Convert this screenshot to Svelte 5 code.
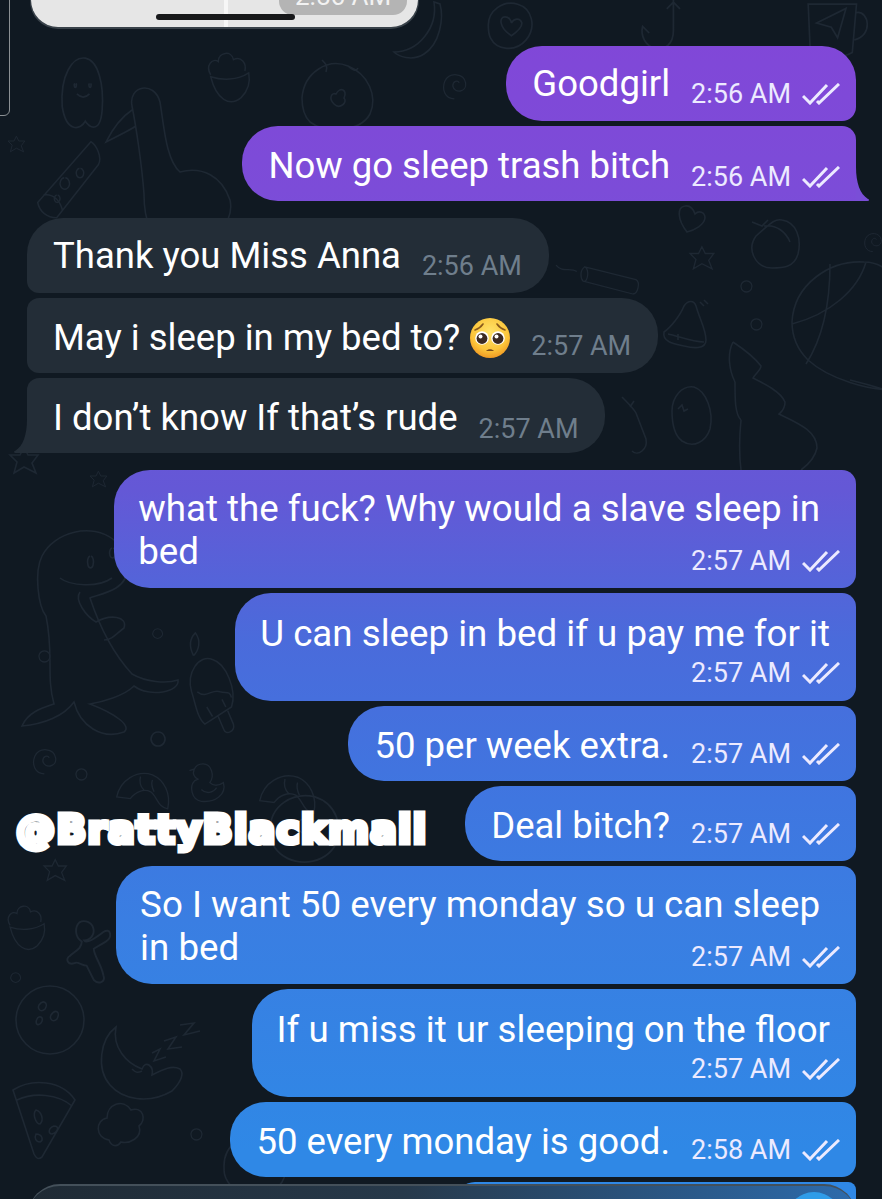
<script>
  // doodle wallpaper: [x, y, scale, path]
  const goose = "M40 118C38 90 32 50 28 30C24 10 50 4 56 26C60 50 62 84 76 96C98 90 118 100 126 124C132 150 100 176 74 172C44 166 40 140 40 118ZM28 34C16 42 8 54 2 66C14 60 26 54 32 50M60 172L52 200M80 172L84 196";
  const pizza = "M6 70L62 6C68 10 74 22 70 30L26 86C16 86 8 80 6 70ZM12 62C24 60 30 70 32 78M34 44a5 6 0 1 0 1 0M26 62a3 4 0 1 0 1 0M50 34a4 5 0 1 0 1 0";
  const pizza2 = "M1 10C20 -2 50 0 63 20L30 77C26 80 24 78 22 74ZM5 20C22 12 46 14 60 26M24 30C20 34 24 44 28 44C32 40 30 32 24 30ZM42 46C36 48 36 54 40 54C46 52 48 46 42 46ZM24 54C22 58 24 62 28 62C32 60 30 54 24 54Z";
  const ghost = "M4 50C2 20 14 2 26 4C38 6 44 28 42 54C40 76 30 70 26 64C22 72 8 76 4 50ZM16 28a1 2 0 1 0 1 0M30 28a1 2 0 1 0 1 0M18 38C22 42 26 42 30 38";
  const bowl = "M6 26C12 50 26 58 38 48C46 40 48 32 46 22C34 30 18 30 6 26ZM6 24C0 14 8 6 14 10C14 0 28 -2 30 8C38 4 44 12 42 20";
  const bird = "M6 40C8 14 32 0 52 8C72 16 82 38 74 56C64 74 30 76 14 64C8 58 6 48 6 40ZM40 36C44 28 52 32 48 40C52 44 44 52 38 46C32 40 36 34 40 36ZM26 2C30 6 32 8 30 14M52 8C56 12 60 14 62 10";
  const spiral = "M18 36C6 36 2 24 6 14C12 2 30 4 32 16C34 28 18 30 16 20C16 14 22 12 24 16";
  const banana = "M46 2C50 28 30 52 6 52C10 56 24 62 36 54C52 44 56 18 52 4Z";
  const heartc = "M6 24C6 10 20 0 34 4C48 8 52 26 42 38C32 50 14 48 8 36C6 32 6 28 6 24ZM28 34C16 26 16 16 22 16C26 16 28 20 28 22C30 18 36 16 38 22C38 26 34 30 28 34Z";
  const heart = "M12 27C2 14 2 2 10 1C16 0 19 6 20 9C24 5 30 7 30 13C29 20 20 25 12 27Z";
  const hook = "M34 0L34 28C34 40 26 46 18 44C8 42 4 32 6 24L12 30M34 2L40 8M34 2L28 8";
  const mug = "M4 4L6 50C16 56 36 56 46 50L50 4ZM50 12C62 10 66 34 48 38M12 22L40 8L32 36L26 26Z";
  const dino = "M26 90C18 80 14 46 22 30C34 6 72 -4 94 14C112 30 112 52 96 62C86 68 74 70 70 72C78 96 90 124 112 148C126 156 146 158 158 154C160 166 130 172 114 160C104 170 82 176 70 178C96 188 112 200 104 206C82 214 60 200 54 176C44 190 24 198 2 200C8 186 22 182 34 178C26 150 34 128 26 90ZM60 66C54 74 66 90 76 96C90 88 108 90 104 102C96 108 92 114 84 114M40 52C50 60 78 62 92 52M70 30a3 6 0 1 0 1 0M92 22a3 5 0 1 0 1 0";
  const pop = "M8 44C2 24 16 4 30 10C44 14 56 42 50 60L22 78C14 72 12 56 8 44ZM14 44C24 52 30 40 38 44C44 46 48 42 50 50M36 70L42 84C44 90 54 86 52 78L46 64M24 60L30 70M40 52L44 60M10 6C4 -6 8 -14 12 -18C18 -10 16 0 10 6";
  const duck = "M10 34C4 40 6 56 18 58C34 60 48 50 44 36C38 40 32 40 28 36C34 28 30 14 20 14C10 14 4 26 14 32ZM4 22L10 20M18 44C24 50 32 48 36 42";
  const shrimp = "M2 34C6 14 26 2 44 8C58 14 66 30 62 48C50 46 50 34 42 28C34 24 24 28 18 36ZM30 10C28 18 30 22 34 26M44 14C42 20 44 24 46 28";
  const apple = "M6 18C-4 32 6 50 22 50C32 50 44 50 48 36C52 20 46 4 32 2C24 0 18 8 6 18ZM2 4L12 8L18 2M14 8C26 6 36 14 40 24";
  const ball = "M2 62C4 24 40 0 74 2C86 2 96 8 102 16L102 130C80 130 40 120 18 100C8 90 2 76 2 62ZM40 4C40 40 34 76 16 104M2 64C40 54 68 30 76 2M60 120C76 124 90 128 102 132";
  const tree = "M8 2C20 10 30 18 36 26C36 30 30 34 28 38C40 44 56 52 60 62C60 70 56 72 54 74C70 82 92 90 92 108C90 118 84 124 76 130M10 42C4 30 2 14 8 2M10 42C10 60 10 74 16 80M16 80C14 100 14 114 16 130";
  const egg = "M2 26C2 12 12 0 24 2C36 6 44 26 40 44C36 56 24 64 12 56C4 50 2 38 2 26ZM8 24L12 20L14 26L18 24";
  const bell = "M2 34C8 30 18 18 22 8C26 2 32 2 34 8C38 22 44 32 44 42C44 52 30 50 22 48C12 46 0 44 2 34ZM6 36C16 38 30 44 42 44M16 42L16 36M38 4L42 8M42 2L46 6";
  const cane = "M2 2C2 2 14 14 16 18L26 44C28 54 18 62 12 56M14 6L10 12";
  const cloud = "M14 40C0 38 0 20 12 18C12 4 28 -2 36 10C48 6 52 20 44 26C48 38 34 44 26 42C22 48 16 46 14 40Z";
  const moon = "M18 2C2 14 -2 44 12 60C24 74 50 80 74 66C84 56 86 48 82 44C74 40 66 44 54 50C56 42 48 34 44 44C28 38 14 22 18 2ZM34 44C38 48 40 48 44 46";
  const zz = "M30 22L44 20L34 32L50 28M14 38L26 34L18 46L32 44M2 50L10 46L4 58L16 54";
  const star = "M14 2L18 10L28 10L22 18L26 28L14 22L4 28L7 17L0 10L10 10Z";
  const roll = "M6 6L70 22M4 24L66 40M6 6C0 10 0 20 4 24C10 26 12 10 6 6ZM70 22C76 26 72 40 66 40M-4 12C-12 6 -22 14 -30 4";
  const donut = "M2 36C2 14 22 2 42 6C62 12 70 34 60 52C48 70 18 70 6 52C2 46 2 42 2 36ZM26 32C28 24 42 24 46 34C46 44 30 44 26 32Z";
  const gingerb = "M12 2a8 8 0 1 1 4 15C18 20 24 16 32 10C38 6 40 14 34 18L24 24C24 30 30 36 32 46C34 52 28 54 24 50L18 38C14 38 10 34 8 36C2 38 0 32 4 30C8 26 14 24 14 18C8 14 8 6 12 2Z";
  const bowling = "M1 35a34 34 0 1 0 68 0a34 34 0 1 0 -68 0ZM24 20C28 14 34 18 30 24C26 28 22 24 24 20ZM36 30C40 24 46 26 42 34C38 38 34 34 36 30ZM22 34C24 30 30 32 26 38C22 42 20 38 22 34Z";
  const ring = "M8 1a7 7 0 1 0 .1 0Z";

  const doodles = [
    [104, 76, 1, goose], [32, 136, 0.95, pizza], [58, 54, 1.05, ghost], [205, 52, 0.95, bowl],
    [296, 58, 1, bird], [440, 70, 0.8, spiral], [388, 0, 1, banana], [482, 0, 1.05, heartc],
    [636, 0, 1.1, hook], [804, 0, 1.05, mug], [20, 526, 1, dino], [184, 650, 0.95, pop],
    [30, 745, 0.8, spiral], [186, 752, 0.85, duck], [115, 768, 0.85, shrimp], [258, 770, 0.9, shrimp],
    [750, 218, 1, apple], [790, 260, 1, ball], [725, 340, 1, tree], [670, 385, 1, egg],
    [662, 298, 1, bell], [620, 395, 1, cane], [580, 262, 0.8, roll], [675, 205, 1, heart],
    [690, 245, 0.85, star], [862, 230, 0.6, spiral], [90, 470, 0.6, star], [8, 135, 0.6, star],
    [10, 445, 1, star], [44, 858, 0.8, star], [12, 1080, 1, pizza2], [95, 1100, 1, cloud],
    [98, 1025, 1, moon], [150, 1003, 1, zz], [5, 905, 0.85, bowl], [65, 920, 1.2, gingerb],
    [15, 985, 1, bowling], [268, 790, 1.1, donut], [190, 1128, 0.8, ring], [10, 972, 0.7, ring],
    [222, 1130, 1, donut], [38, 650, 0.8, ring], [150, 731, 1, ring], [75, 768, 0.8, ring],
    [152, 628, 0.7, ring], [740, 280, 0.8, ring], [750, 318, 0.8, ring]
  ];

  // each row: who, text lines, time, layout
  const messages = [
    { out: true, text: ["Goodgirl"], time: "2:56 AM", shape: "first" },
    { out: true, text: ["Now go sleep trash bitch"], time: "2:56 AM", shape: "last" },
    { out: false, text: ["Thank you Miss Anna"], time: "2:56 AM", shape: "first" },
    { out: false, text: ["May i sleep in my bed to?"], emoji: true, time: "2:57 AM", shape: "mid" },
    { out: false, text: ["I don’t know If that’s rude"], time: "2:57 AM", shape: "last" },
    { out: true, text: ["what the fuck? Why would a slave sleep in", "bed"], time: "2:57 AM", shape: "first", layout: "wrap" },
    { out: true, text: ["U can sleep in bed if u pay me for it"], time: "2:57 AM", shape: "mid", layout: "stack" },
    { out: true, text: ["50 per week extra."], time: "2:57 AM", shape: "mid" },
    { out: true, text: ["Deal bitch?"], time: "2:57 AM", shape: "mid", mark: true },
    { out: true, text: ["So I want 50 every monday so u can sleep", "in bed"], time: "2:57 AM", shape: "mid", layout: "wrap" },
    { out: true, text: ["If u miss it ur sleeping on the floor"], time: "2:57 AM", shape: "mid", layout: "stack" },
    { out: true, text: ["50 every monday is good."], time: "2:58 AM", shape: "mid" }
  ];
</script>

{#snippet meta(m)}
  <div class="meta">
    <span class="time">{m.time}</span>
    {#if m.out}
      <svg class="ticks" viewBox="0 0 38 22" width="38" height="22" fill="none" stroke="currentColor" stroke-width="3">
        <path d="M1 13L8 20L25 2" />
        <path d="M15 18L17 20L37 1" />
      </svg>
    {/if}
  </div>
{/snippet}

<div class="screen">
  <svg class="wallpaper" width="882" height="1199" fill="none" stroke="#1e2833" stroke-width="1.6">
    {#each doodles as [x, y, s, d]}
      <path transform="translate({x} {y}) scale({s})" {d} />
    {/each}
  </svg>

  <div class="frame"></div>

  <div class="chat">
    <div class="photo">
      <span class="photo-time">2:56 AM</span>
      <span class="home-bar"></span>
    </div>

    {#each messages as m}
      <div class="line" class:out={m.out} class:after-switch={m.shape === "first"}>
        {#if m.mark}<span class="watermark">@BrattyBlackmail</span>{/if}
        <div class="bubble {m.shape} {m.layout ?? 'row'}" class:out={m.out}>
          <div class="text">
            {#each m.text as t, i}
              {#if i > 0}<br />{/if}{t}
            {/each}
            {#if m.emoji}
              <svg class="emoji" viewBox="0 0 40 40" width="40" height="40">
                <defs>
                  <radialGradient id="face" cx="50%" cy="35%" r="70%">
                    <stop offset="0" stop-color="#ffe36a" />
                    <stop offset="0.65" stop-color="#fcc53a" />
                    <stop offset="1" stop-color="#ee8f1e" />
                  </radialGradient>
                </defs>
                <circle cx="20" cy="20" r="20" fill="url(#face)" />
                <path d="M5 12C8 11 11 9 13 6M35 12C32 11 29 9 27 6" fill="none" stroke="#8a5a1c" stroke-width="1.6" stroke-linecap="round" />
                <circle cx="12" cy="20" r="6.8" fill="#fff" />
                <circle cx="28" cy="20" r="6.8" fill="#fff" />
                <circle cx="12" cy="20.5" r="5.4" fill="#3b2a22" />
                <circle cx="28" cy="20.5" r="5.4" fill="#3b2a22" />
                <circle cx="10.5" cy="18.5" r="2" fill="#fff" />
                <circle cx="26.5" cy="18.5" r="2" fill="#fff" />
                <path d="M16 33C18 30.5 22 30.5 24 33Z" fill="#7a4a1a" />
              </svg>
            {/if}
          </div>
          {@render meta(m)}
          {#if m.shape === "last"}
            <svg class="tail" class:out={m.out} viewBox="0 0 18 34" width="18" height="34">
              {#if m.out}
                <path d="M0 0C0 16 4 27 12 32C14 33 13 34 11 34L0 34Z" fill="#7a4ed7" />
              {:else}
                <path d="M18 0C18 16 14 27 6 32C4 33 5 34 7 34L18 34Z" fill="#232d37" />
              {/if}
            </svg>
          {/if}
        </div>
      </div>
    {/each}

    <div class="line out"><div class="bubble out mid partial"></div></div>
  </div>

  <div class="composer"><span class="send"></span></div>
</div>

<style>
  :global(body) {
    background: #101922;
  }

  .screen {
    position: relative;
    width: 882px;
    height: 1199px;
    overflow: hidden;
    background: #101922;
    font-family: Roboto, "Liberation Sans", sans-serif;
  }

  .wallpaper {
    position: absolute;
    inset: 0;
  }

  .frame {
    position: absolute;
    left: -20px;
    top: -20px;
    width: 28px;
    height: 134px;
    border: 1.5px solid #8b9094;
    border-radius: 0 0 6px 0;
  }

  .chat {
    position: relative;
    display: flex;
    flex-direction: column;
    gap: 5px;
    padding-right: 26px;
  }

  .photo {
    position: relative;
    width: 387px;
    height: 27px;
    margin: 0 0 14px 31px;
    background: linear-gradient(90deg, #e6e6e6 0 50%, #f6f6f6 50% 51%, #e6e6e6 51%);
    border-radius: 0 0 34px 34px;
    box-shadow: 0 1px 0 1px #39424a;
  }

  .photo-time {
    position: absolute;
    right: 11px;
    bottom: 12px;
    width: 128px;
    height: 30px;
    border-radius: 14px;
    background: #b4b4b4;
    color: #f2f2f2;
    font-size: 26px;
    line-height: 22px;
    text-align: center;
  }

  .home-bar {
    position: absolute;
    left: 125px;
    top: 14px;
    width: 139px;
    height: 6px;
    border-radius: 3px;
    background: #17181a;
  }

  .line {
    display: flex;
    align-items: flex-start;
    justify-content: flex-start;
    padding-left: 27px;
  }

  .line.out {
    justify-content: flex-end;
    padding-left: 0;
  }

  .line.after-switch {
    margin-top: 12px;
  }

  .line.after-switch:nth-child(2) {
    margin-top: 0;
  }

  .watermark {
    margin: 21px auto 0 16px;
    color: #fff;
    font-family: "DejaVu Sans", sans-serif;
    font-weight: 700;
    font-size: 39px;
    line-height: 46px;
    letter-spacing: 1.4px;
    -webkit-text-stroke: 5px #fff;
    paint-order: stroke;
    white-space: nowrap;
  }

  .bubble {
    position: relative;
    color: #fff;
    background: #232d37;
    border-radius: 36px;
  }

  .bubble.out {
    background: linear-gradient(
        180deg,
        #8246d8 0,
        #7c4cd8 190px,
        #6458d6 490px,
        #4a6bdb 640px,
        #3f76e0 800px,
        #3a7ee2 920px,
        #2f88e6 1150px
      )
      fixed;
  }

  .bubble.first {
    border-bottom-left-radius: 12px;
  }
  .bubble.mid {
    border-top-left-radius: 12px;
    border-bottom-left-radius: 12px;
  }
  .bubble.last {
    border-top-left-radius: 12px;
    border-bottom-left-radius: 0;
  }

  .bubble.out.first,
  .bubble.out.mid,
  .bubble.out.last {
    border-radius: 36px 14px 14px 36px;
  }
  .bubble.out.last {
    border-bottom-right-radius: 0;
  }
  .bubble.out.first {
    border-top-right-radius: 34px;
  }
  .line:nth-child(n + 7) .bubble.out.first {
    border-top-right-radius: 14px;
  }

  .bubble.row {
    display: flex;
    align-items: flex-start;
    gap: 21px;
    padding: 19px 16px 11px 26px;
  }

  .bubble.row:not(.out) {
    padding-right: 27px;
  }

  .bubble.row.first .text {
    margin-top: -2px;
  }

  .bubble.row.last {
    padding-bottom: 8px;
  }

  .bubble.stack {
    padding: 20px 16px 12px 25px;
  }

  .bubble.wrap {
    padding: 17px 16px 11px 24px;
  }

  .text {
    display: flex;
    align-items: center;
    gap: 10px;
    font-size: 36.5px;
    line-height: 42px;
    white-space: nowrap;
  }

  .wrap .text,
  .stack .text {
    display: block;
    padding-right: 10px;
    font-size: 36.7px;
  }

  .wrap .text {
    line-height: 43px;
    padding-right: 20px;
  }

  .meta {
    display: flex;
    align-items: center;
    justify-content: flex-end;
    gap: 11px;
    height: 32px;
    margin-top: 13px;
    font-size: 27px;
    color: #eceaff;
  }

  .row.last .meta {
    margin-top: 16px;
  }

  .stack .meta {
    margin-top: 2px;
  }

  .wrap .meta {
    margin-top: -28px;
  }

  .bubble:not(.out) .meta {
    color: #6f7e8c;
  }

  .ticks {
    flex: none;
  }

  .emoji {
    flex: none;
  }

  .tail {
    position: absolute;
    bottom: 0;
  }

  .tail.out {
    left: 100%;
  }

  .tail:not(.out) {
    right: 100%;
  }

  .partial {
    width: 401px;
    height: 40px;
  }

  .composer {
    position: absolute;
    left: 28px;
    right: 26px;
    top: 1184px;
    height: 60px;
    border-radius: 32px 32px 0 0;
    border-top: 2px solid #44505a;
    background: linear-gradient(90deg, #1f2a34 0, #27394a 45%, #2d6bac 100%);
    box-sizing: border-box;
  }

  .send {
    position: absolute;
    right: 14px;
    top: 6px;
    width: 56px;
    height: 56px;
    border-radius: 50%;
    background: #2f9ce8;
  }
</style>
